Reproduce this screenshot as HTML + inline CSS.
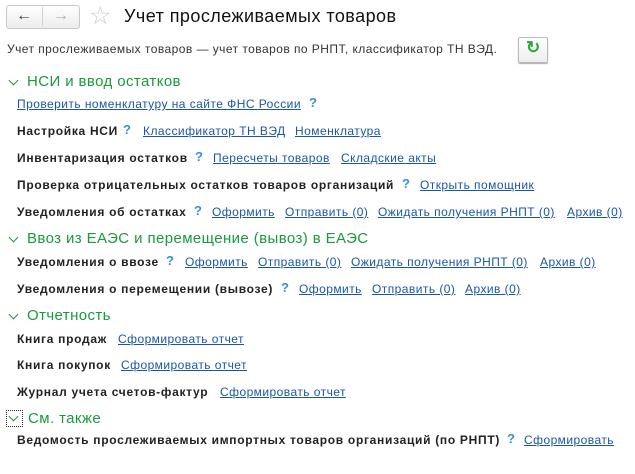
<!DOCTYPE html>
<html><head><meta charset="utf-8"><style>
body{margin:0;width:635px;height:474px;background:#fff;font-family:"Liberation Sans",Arial,sans-serif;position:relative;overflow:hidden;color:#333}
.a{position:absolute;white-space:nowrap;font-size:12px;line-height:14px;letter-spacing:0.45px}
.b{font-weight:bold;color:#222;letter-spacing:0.7px}
.l{color:#1a56a8;text-decoration:underline;text-underline-offset:1px}
.q{color:#3d8fd0;font-weight:bold;font-size:13px;letter-spacing:0}
.h{position:absolute;font-size:15px;color:#1a9a3c;white-space:nowrap;line-height:18px;letter-spacing:0.4px}
.chev{position:absolute;width:6px;height:6px;border-right:1.6px solid #1a9a3c;border-bottom:1.6px solid #1a9a3c;transform:rotate(45deg)}
</style></head><body>
<div style="position:absolute;left:6px;top:5px;width:72px;height:22px;border:1px solid #c8c8c8;border-radius:3px;background:linear-gradient(#fff,#ececec)"></div>
<div style="position:absolute;left:42px;top:7px;width:1px;height:19px;background:#d0d0d0"></div>
<div style="position:absolute;left:16px;top:7px;font-size:16px;color:#444;font-weight:bold">&#8592;</div>
<div style="position:absolute;left:53px;top:7px;font-size:16px;color:#aaa;font-weight:bold">&#8594;</div>
<div style="position:absolute;left:89px;top:1px;font-size:25px;color:#ccc">&#9734;</div>
<div style="position:absolute;left:124px;top:6px;font-size:18px;color:#111;letter-spacing:0.45px">Учет прослеживаемых товаров</div>
<div class="a" style="left:7px;top:42px;color:#333">Учет прослеживаемых товаров — учет товаров по РНПТ, классификатор ТН ВЭД.</div>
<div style="position:absolute;left:518px;top:37px;width:28px;height:24px;border:1px solid #bbb;border-radius:2px;background:linear-gradient(#fff,#eee);box-shadow:0 1px 1px #aaa"></div>
<div style="position:absolute;left:526px;top:38px;font-size:17px;font-weight:bold;color:#2aa838">&#8635;</div>

<div class="chev" style="left:10px;top:77px"></div><div class="h" style="left:27px;top:73px">НСИ и ввод остатков</div>
<div class="a l" style="left:17px;top:97px">Проверить номенклатуру на сайте ФНС России</div><div class="a q" style="left:309px;top:96px">?</div>

<div class="a b" style="left:17px;top:124px">Настройка НСИ</div><div class="a q" style="left:123px;top:123px">?</div>
<div class="a l" style="left:143px;top:124px">Классификатор ТН ВЭД</div><div class="a l" style="left:295px;top:124px">Номенклатура</div>

<div class="a b" style="left:17px;top:151px">Инвентаризация остатков</div><div class="a q" style="left:195px;top:150px">?</div>
<div class="a l" style="left:213px;top:151px">Пересчеты товаров</div><div class="a l" style="left:341px;top:151px">Складские акты</div>

<div class="a b" style="left:17px;top:178px">Проверка отрицательных остатков товаров организаций</div><div class="a q" style="left:402px;top:177px">?</div>
<div class="a l" style="left:420px;top:178px">Открыть помощник</div>

<div class="a b" style="left:17px;top:205px">Уведомления об остатках</div><div class="a q" style="left:194px;top:204px">?</div>
<div class="a l" style="left:212px;top:205px">Оформить</div><div class="a l" style="left:285px;top:205px">Отправить (0)</div><div class="a l" style="left:378px;top:205px">Ожидать получения РНПТ (0)</div><div class="a l" style="left:567px;top:205px">Архив (0)</div>

<div class="chev" style="left:10px;top:234px"></div><div class="h" style="left:27px;top:230px">Ввоз из ЕАЭС и перемещение (вывоз) в ЕАЭС</div>
<div class="a b" style="left:17px;top:255px">Уведомления о ввозе</div><div class="a q" style="left:166px;top:254px">?</div>
<div class="a l" style="left:185px;top:255px">Оформить</div><div class="a l" style="left:258px;top:255px">Отправить (0)</div><div class="a l" style="left:351px;top:255px">Ожидать получения РНПТ (0)</div><div class="a l" style="left:540px;top:255px">Архив (0)</div>

<div class="a b" style="left:17px;top:282px">Уведомления о перемещении (вывозе)</div><div class="a q" style="left:281px;top:281px">?</div>
<div class="a l" style="left:299px;top:282px">Оформить</div><div class="a l" style="left:372px;top:282px">Отправить (0)</div><div class="a l" style="left:465px;top:282px">Архив (0)</div>

<div class="chev" style="left:10px;top:311px"></div><div class="h" style="left:27px;top:307px">Отчетность</div>
<div class="a b" style="left:17px;top:332px">Книга продаж</div><div class="a l" style="left:118px;top:332px">Сформировать отчет</div>
<div class="a b" style="left:17px;top:358px">Книга покупок</div><div class="a l" style="left:121px;top:358px">Сформировать отчет</div>
<div class="a b" style="left:17px;top:385px">Журнал учета счетов-фактур</div><div class="a l" style="left:220px;top:385px">Сформировать отчет</div>

<div style="position:absolute;left:6px;top:410px;width:15px;height:15px;border:1px dotted #333"></div>
<div class="chev" style="left:10px;top:413px"></div><div class="h" style="left:28px;top:410px">См. также</div>
<div class="a b" style="left:17px;top:433px">Ведомость прослеживаемых импортных товаров организаций (по РНПТ)</div><div class="a q" style="left:507px;top:432px">?</div>
<div class="a l" style="left:524px;top:433px">Сформировать</div>
</body></html>
